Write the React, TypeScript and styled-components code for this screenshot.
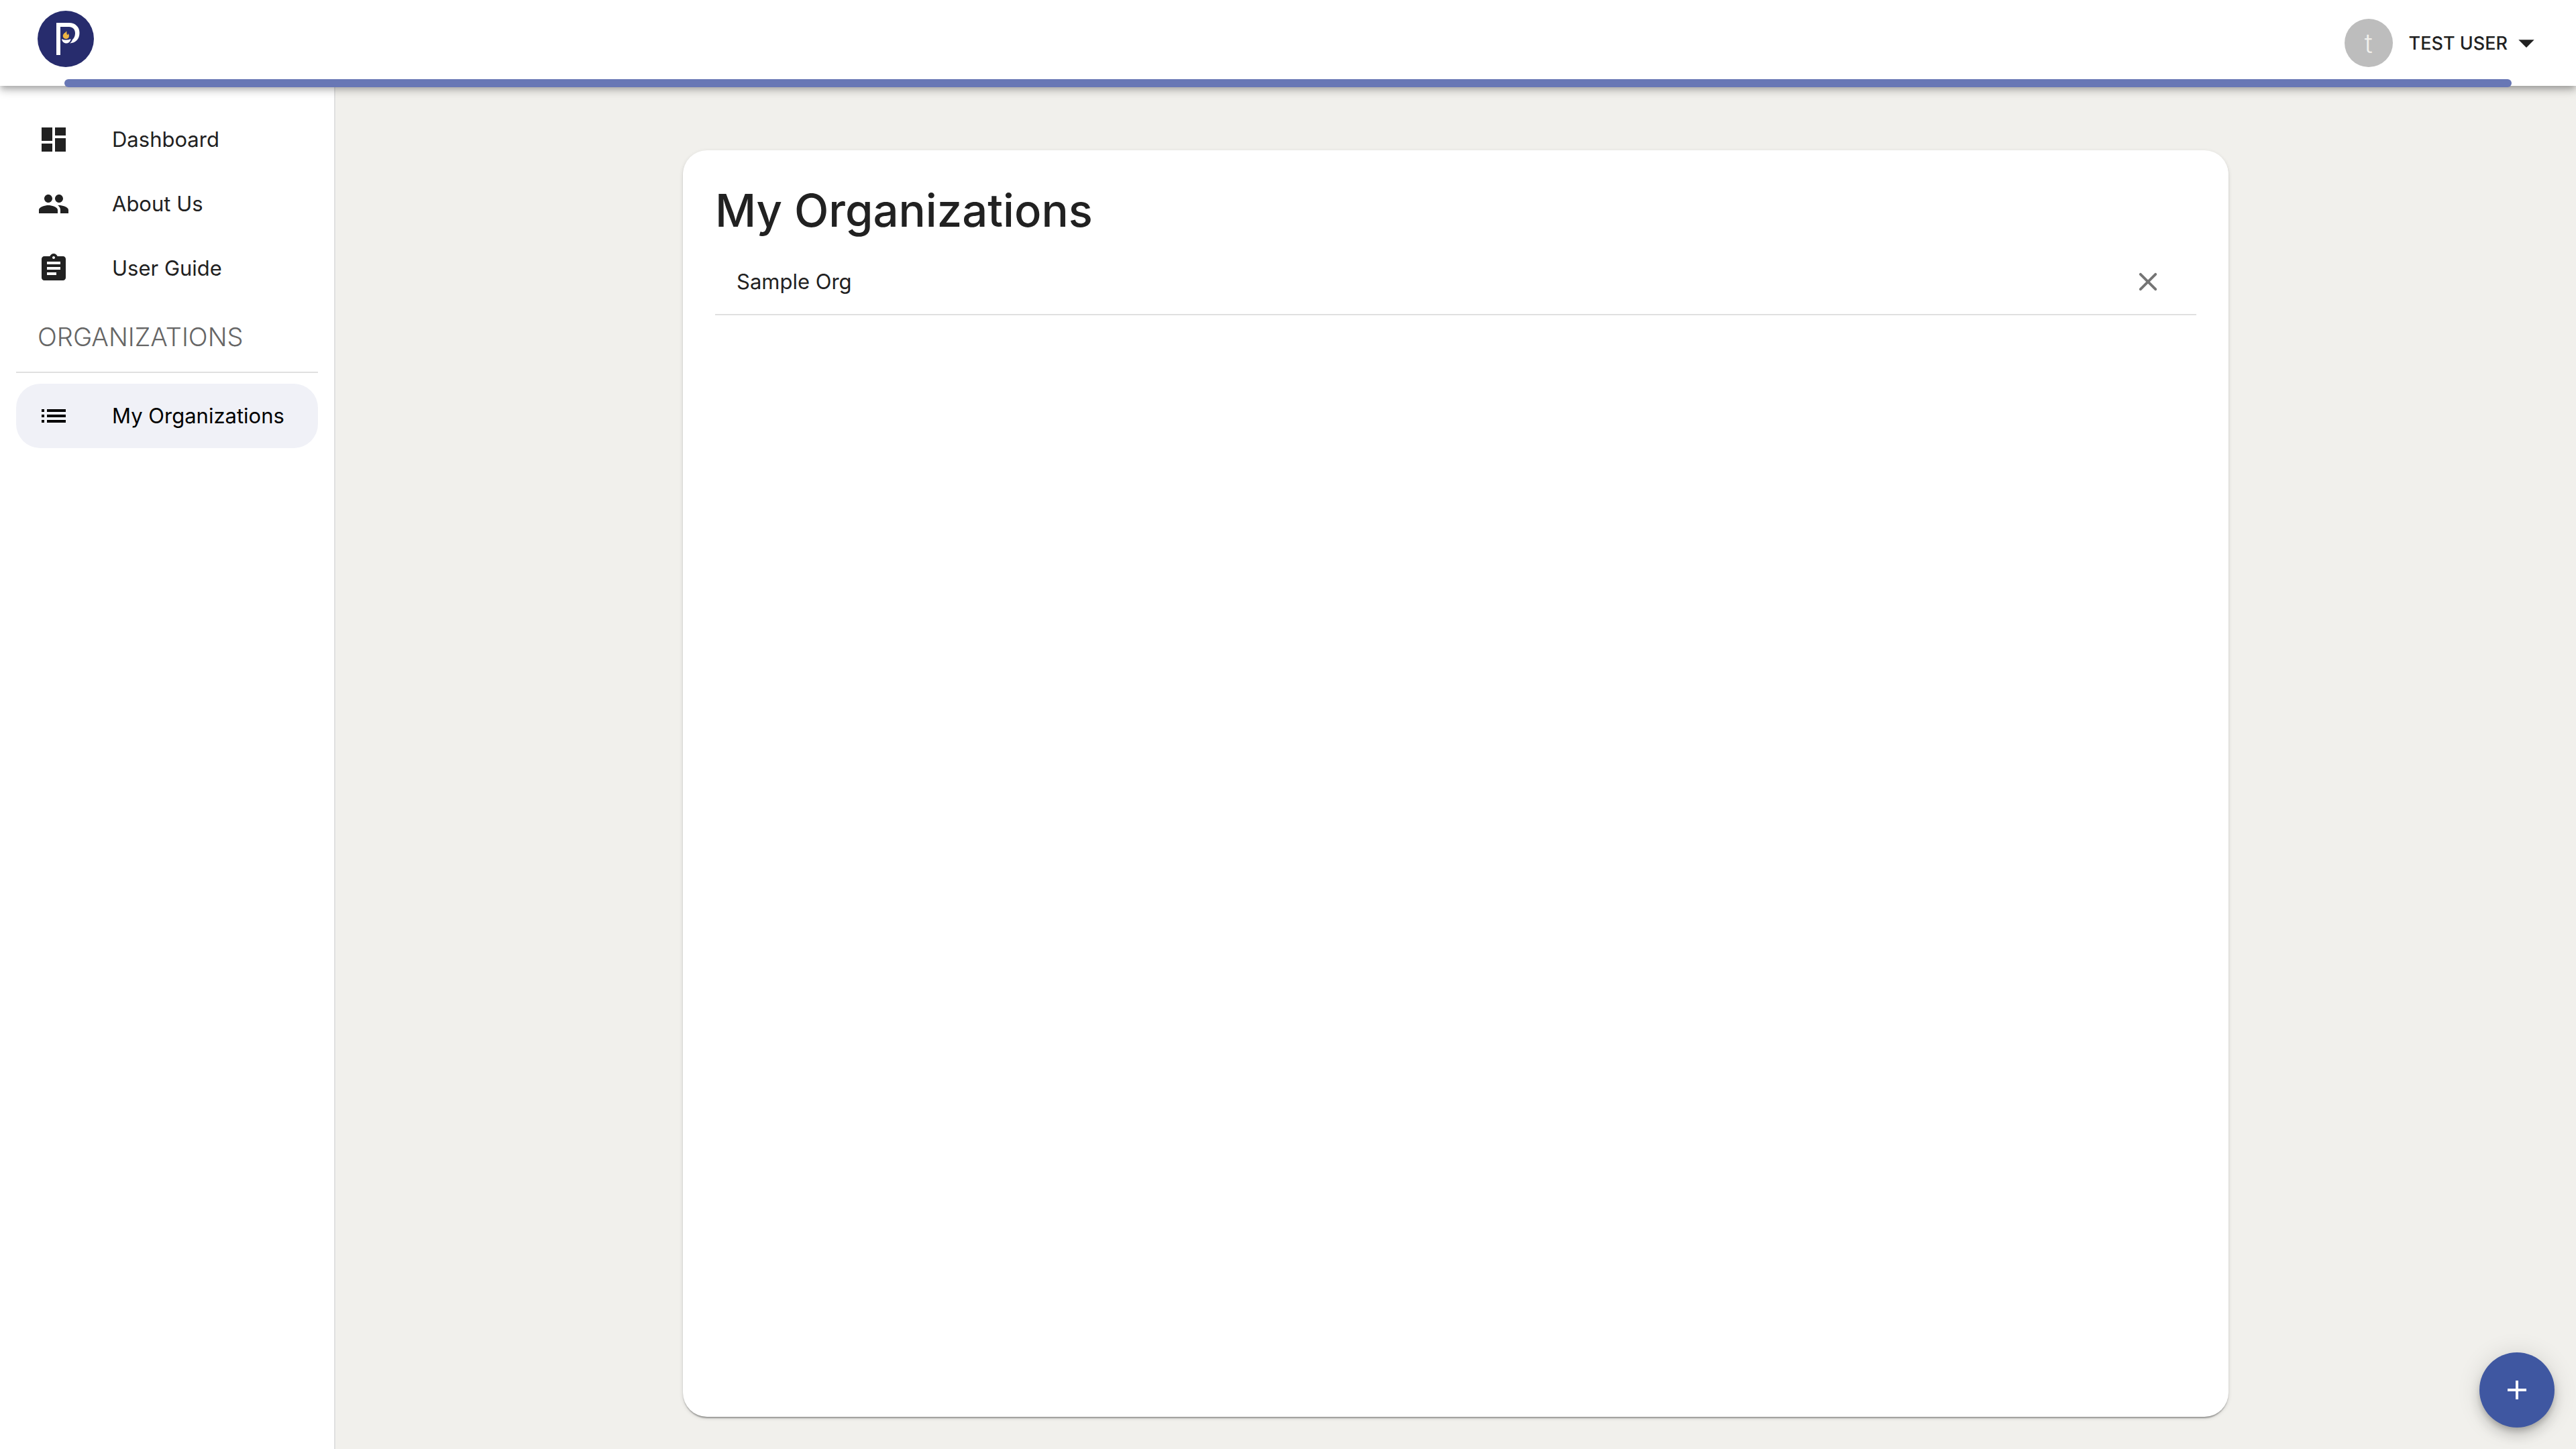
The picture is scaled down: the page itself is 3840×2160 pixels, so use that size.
import React from "react";
import styled, { createGlobalStyle } from "styled-components";

const GlobalStyle = createGlobalStyle`
  * { box-sizing: border-box; }
  body {
    margin: 0;
    background: #f1f0ec;
    color: #212121;
    font-family: Inter, "Liberation Sans", sans-serif;
    font-size: 31px;
    line-height: 48px;
  }
`;

const Page = styled.div`
  display: flex;
  flex-direction: column;
  min-height: 100vh;
`;

const Header = styled.header`
  position: relative;
  z-index: 2;
  display: flex;
  justify-content: space-between;
  height: 128px;
  padding: 0 46px 0 56px;
  background: #fff;
  box-shadow: 0 4px 8px -2px rgba(0, 0, 0, 0.2), 0 8px 10px rgba(0, 0, 0, 0.14),
    0 2px 20px rgba(0, 0, 0, 0.12);
`;

const HomeLink = styled.a`
  width: 84px;
  height: 84px;
  margin-top: 16px;
  svg { display: block; width: 100%; height: 100%; }
`;

const Icon = styled.svg<{ $size: number }>`
  flex: none;
  width: ${(p) => p.$size}px;
  height: ${(p) => p.$size}px;
  fill: currentColor;
`;

const UserButton = styled.button`
  display: flex;
  align-items: center;
  height: 128px;
  padding: 0;
  border: 0;
  background: none;
  color: inherit;
  font-family: inherit;
  font-size: 27px;
  font-weight: 500;
  text-transform: uppercase;
`;

const Avatar = styled.span`
  display: grid;
  place-items: center;
  width: 72px;
  height: 72px;
  margin-right: 24px;
  border-radius: 50%;
  background: #bdbdbd;
  color: #f1f0ec;
  font-size: 40px;
  font-weight: 300;
  text-transform: none;
`;

const Progress = styled.div`
  position: absolute;
  left: 2.5%;
  right: 2.5%;
  bottom: -2px;
  height: 12px;
  border-radius: 6px;
  background: #6877b5;
`;

const Body = styled.div`
  display: flex;
  flex: 1;
`;

const Sidebar = styled.nav`
  flex: none;
  width: 500px;
  padding: 32px 24px;
  border-right: 2px solid #e0e0e0;
  background: #fff;
`;

const NavList = styled.ul`
  margin: 0;
  padding: 0;
  list-style: none;
`;

const NavLink = styled.a<{ $active?: boolean }>`
  display: flex;
  align-items: center;
  gap: 63px;
  height: 96px;
  padding: 0 32px;
  border-radius: 36px;
  background: ${(p) => (p.$active ? "#f0f1f7" : "transparent")};
  color: ${(p) => (p.$active ? "#000" : "#212121")};
  text-decoration: none;
  white-space: nowrap;
`;

const SectionTitle = styled.h2`
  margin: 0 0 16px;
  padding: 28px 32px 26px;
  border-bottom: 2px solid #e0e0e0;
  color: #666;
  font-size: 38px;
  font-weight: 300;
  line-height: 52px;
  text-transform: uppercase;
`;

const Main = styled.main`
  display: flex;
  flex: 1;
  justify-content: center;
  padding: 96px 0 48px;
`;

const Card = styled.section`
  width: 60vw;
  padding: 48px;
  border-radius: 36px;
  background: #fff;
  box-shadow: 0 4px 2px -2px rgba(0, 0, 0, 0.2), 0 2px 2px rgba(0, 0, 0, 0.14),
    0 2px 6px rgba(0, 0, 0, 0.12);
`;

const Title = styled.h1`
  margin: 0 0 16px;
  font-size: 67px;
  font-weight: 500;
  line-height: 84px;
`;

const OrgList = styled.ul`
  margin: 0;
  padding: 0;
  list-style: none;
`;

const OrgRow = styled.li`
  display: flex;
  align-items: center;
  justify-content: space-between;
  height: 98px;
  padding: 0 48px 0 32px;
  border-bottom: 2px solid #e0e0e0;
`;

const IconButton = styled.button`
  display: flex;
  padding: 0;
  border: 0;
  background: none;
  color: #757575;
`;

const Fab = styled.button`
  position: fixed;
  right: 32px;
  bottom: 32px;
  display: grid;
  place-items: center;
  width: 112px;
  height: 112px;
  padding: 0;
  border: 0;
  border-radius: 50%;
  background: #3f57a1;
  color: #fff;
  box-shadow: 0 6px 10px -2px rgba(0, 0, 0, 0.2), 0 12px 20px rgba(0, 0, 0, 0.14),
    0 2px 36px rgba(0, 0, 0, 0.12);
`;

const icons = {
  dashboard: "M3 13h8V3H3v10zm0 8h8v-6H3v6zm10 0h8V11h-8v10zm0-18v6h8V3h-8z",
  people:
    "M16 11c1.66 0 2.99-1.34 2.99-3S17.66 5 16 5c-1.66 0-3 1.34-3 3s1.34 3 3 3zm-8 0c1.66 0 2.99-1.34 2.99-3S9.66 5 8 5C6.34 5 5 6.34 5 8s1.34 3 3 3zm0 2c-2.33 0-7 1.17-7 3.5V19h14v-2.5c0-2.33-4.67-3.5-7-3.5zm8 0c-.29 0-.62.02-.97.05 1.16.84 1.97 1.97 1.97 3.45V19h6v-2.5c0-2.33-4.67-3.5-7-3.5z",
  guide:
    "M19 3h-4.18C14.4 1.84 13.3 1 12 1c-1.3 0-2.4.84-2.82 2H5c-1.1 0-2 .9-2 2v14c0 1.1.9 2 2 2h14c1.1 0 2-.9 2-2V5c0-1.1-.9-2-2-2zm-7 0c.55 0 1 .45 1 1s-.45 1-1 1-1-.45-1-1 .45-1 1-1zm2 14H7v-2h7v2zm3-4H7v-2h10v2zm0-4H7V7h10v2z",
  list: "M3 13h2v-2H3v2zm0 4h2v-2H3v2zm0-8h2V7H3v2zm4 4h14v-2H7v2zm0 4h14v-2H7v2zM7 7v2h14V7H7z",
  close:
    "M18.3 5.71a.9959.9959 0 0 0-1.41 0L12 10.59 7.11 5.7a.9959.9959 0 0 0-1.41 0c-.39.39-.39 1.02 0 1.41L10.59 12 5.7 16.89c-.39.39-.39 1.02 0 1.41.39.39 1.02.39 1.41 0L12 13.41l4.89 4.89c.39.39 1.02.39 1.41 0 .39-.39.39-1.02 0-1.41L13.41 12l4.89-4.89c.38-.38.38-1.02 0-1.4z",
  add: "M19 13h-6v6h-2v-6H5v-2h6V5h2v6h6v2z",
  arrow: "M7 10l5 5 5-5z",
};

const Glyph = ({ name, size = 48 }: { name: keyof typeof icons; size?: number }) => (
  <Icon viewBox="0 0 24 24" $size={size} aria-hidden="true">
    <path d={icons[name]} />
  </Icon>
);

const Logo = () => (
  <svg viewBox="0 0 84 84" aria-hidden="true">
    <circle cx="42" cy="42" r="42" fill="#272c6d" />
    <path
      fill="#fff"
      d="M28 18h19c9 0 15.500 6 15.500 15C62.500 42 57 48 48 48.500c2.500-1.500 3-3.500 4-5.500 2.500-2 4-5.500 4-9.500 0-6-4-9.500-9-9.500H34v42h-6z"
    />
    <path fill="#fff" d="M36 42c4 2 9 2 13.500 0-.5 4-3 6.500-6.700 6.500S36.500 46 36 42z" />
    <path
      fill="#efb643"
      d="M43 30c1 3 0 4 1.500 6 1-.5 1.200-1.500 1-2.500 2.500 3 2 8-2.700 8.500-5 0-6.500-5-3.500-8 1.500-1.500 3.500-2 3.700-4z"
    />
  </svg>
);

const links = [
  { label: "Dashboard", icon: "dashboard" },
  { label: "About Us", icon: "people" },
  { label: "User Guide", icon: "guide" },
] as const;

export default function App() {
  return (
    <Page>
      <GlobalStyle />
      <Header>
        <HomeLink href="#" aria-label="Home">
          <Logo />
        </HomeLink>
        <UserButton>
          <Avatar>t</Avatar>
          Test User
          <Glyph name="arrow" size={56} />
        </UserButton>
        <Progress />
      </Header>
      <Body>
        <Sidebar>
          <NavList>
            {links.map((l) => (
              <li key={l.label}>
                <NavLink href="#">
                  <Glyph name={l.icon} />
                  {l.label}
                </NavLink>
              </li>
            ))}
          </NavList>
          <SectionTitle>Organizations</SectionTitle>
          <NavList>
            <li>
              <NavLink href="#" $active>
                <Glyph name="list" />
                My Organizations
              </NavLink>
            </li>
          </NavList>
        </Sidebar>
        <Main>
          <Card>
            <Title>My Organizations</Title>
            <OrgList>
              <OrgRow>
                Sample Org
                <IconButton aria-label="Remove Sample Org">
                  <Glyph name="close" />
                </IconButton>
              </OrgRow>
            </OrgList>
          </Card>
        </Main>
      </Body>
      <Fab aria-label="Add organization">
        <Glyph name="add" />
      </Fab>
    </Page>
  );
}
